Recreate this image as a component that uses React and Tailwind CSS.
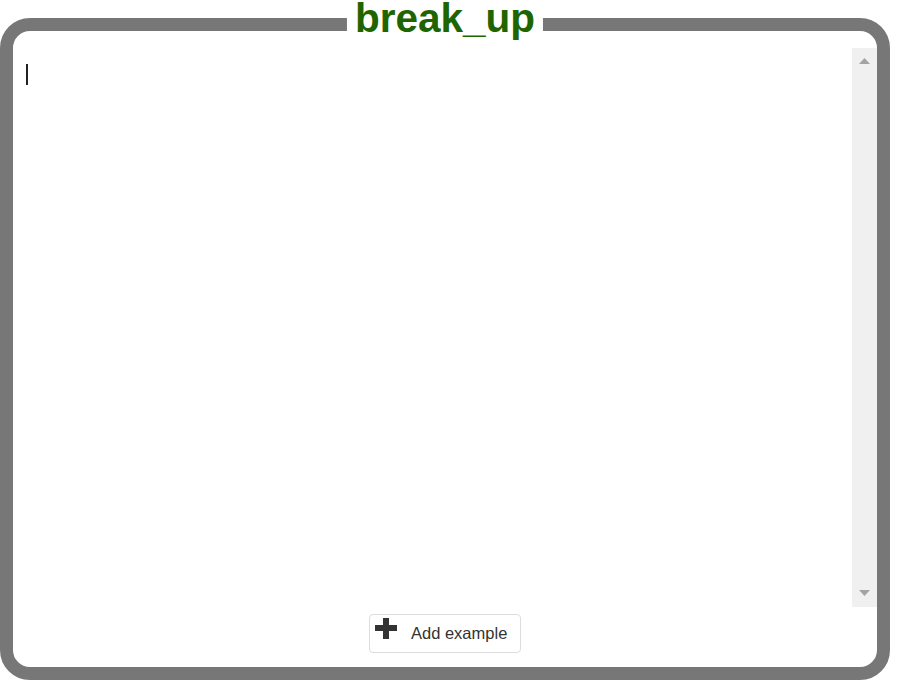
import React from 'react'

// Small triangle for the scrollbar buttons
const Arrow = ({ up }) => (
  <svg width="11" height="6" viewBox="0 0 11 6" className="block">
    <path d={up ? 'M0 6L5.5 0 11 6z' : 'M0 0h11L5.5 6z'} fill="#a3a3a3" />
  </svg>
)

const PlusIcon = () => (
  <svg width="22" height="21" viewBox="0 0 22 21" className="block">
    <rect x="8" y="0" width="6" height="21" fill="#333" />
    <rect x="0" y="7" width="22" height="6" fill="#333" />
  </svg>
)

export default function App() {
  return (
    <div className="w-[898px] h-[688px] bg-white pt-[18px] font-['Liberation_Sans',Arial,sans-serif]">
      <div className="relative w-[890px] h-[662px] border-[13px] border-[#777777] rounded-[30px] flex flex-col">

        {/* Title sits over the top border */}
        <div className="absolute left-1/2 -translate-x-1/2 top-[-31px] bg-white px-[8px]
          text-[40.5px] leading-[36px] font-bold text-[#1e6500] whitespace-nowrap">
          break_up
        </div>

        {/* Editor area */}
        <div className="mt-[17px] h-[559px] flex">
          <div className="flex-1 pl-[13px] pt-[16px]">
            <div className="w-[2px] h-[21px] bg-[#222]" />
          </div>
          <div className="w-[25px] bg-[#f0f0f0] flex flex-col items-center justify-between pt-[10px] pb-[11px]">
            <Arrow up />
            <Arrow />
          </div>
        </div>

        {/* Add example */}
        <div className="mt-[7px] flex justify-center">
          <button className="h-[39px] w-[152px] border border-[#dddddd] rounded-[4px] bg-white
            flex items-center pl-[5px] text-[16.5px] text-[#333]">
            <span className="-mt-[10px]"><PlusIcon /></span>
            <span className="ml-[14px]">Add example</span>
          </button>
        </div>
      </div>
    </div>
  )
}
